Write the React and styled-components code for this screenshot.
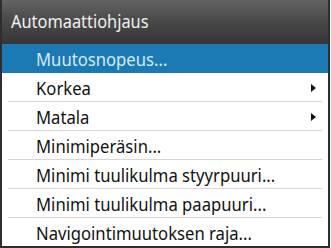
import React from "react";
import styled, { createGlobalStyle } from "styled-components";

const Global = createGlobalStyle`
  html, body { margin: 0; padding: 0; background: #f4f4f4; }
  body { width: 331px; height: 248px; overflow: hidden; }
`;

const Frame = styled.div`
  width: 330px;
  height: 248px;
  box-sizing: border-box;
  border-left: 2px solid #2e2e2e;
  border-right: 2px solid #2e2e2e;
  border-bottom: 2px solid #2e2e2e;
  display: flex;
  flex-direction: column;
  background: #ffffff;
  font-family: "Noto Sans", "Open Sans", sans-serif;
`;

const Header = styled.div`
  height: 44px;
  flex: none;
  box-sizing: border-box;
  padding: 9px 0 0 9px;
  background: linear-gradient(to bottom, #646464 0%, #4a4a4a 45%, #363636 100%);
`;

const Condensed = styled.span`
  display: inline-block;
  white-space: nowrap;
  font-size: 18px;
  transform: scaleX(${(p) => p.$sx || 0.925});
  transform-origin: left center;
`;

const Title = styled(Condensed)`
  color: #f0f0f0;
  line-height: 24px;
`;

const List = styled.div`
  display: flex;
  flex-direction: column;
`;

const Row = styled.div`
  height: 29px;
  flex: none;
  display: flex;
  align-items: flex-start;
  padding-left: 34px;
  padding-right: 12px;
  position: relative;
  background: ${(p) => (p.$active ? "#1b7ab4" : "transparent")};
  color: ${(p) => (p.$active ? "#d6ebf8" : "#111111")};
  &::after {
    content: "";
    display: ${(p) => (p.$last || p.$active ? "none" : "block")};
    position: absolute;
    left: 6px;
    right: 6px;
    bottom: 0;
    height: 1px;
    background: #dcd4d4;
  }
`;

const Label = styled(Condensed)`
  line-height: 29px;
  margin-top: 1px;
`;

const Spacer = styled.div`
  flex: 1;
`;

const Arrow = styled.svg`
  width: 5px;
  height: 8px;
  flex: none;
  align-self: center;
`;

const items = [
  { label: "Muutosnopeus...", active: true },
  { label: "Korkea", sub: true },
  { label: "Matala", sub: true },
  { label: "Minimiperäsin..." },
  { label: "Minimi tuulikulma styyrpuuri..." },
  { label: "Minimi tuulikulma paapuuri..." },
  { label: "Navigointimuutoksen raja...", last: true },
];

export default function App() {
  return (
    <>
      <Global />
      <Frame>
        <Header>
          <Title $sx={0.91}>Automaattiohjaus</Title>
        </Header>
        <List>
          {items.map((it) => (
            <Row key={it.label} $active={it.active} $last={it.last}>
              <Label>{it.label}</Label>
              <Spacer />
              {it.sub && (
                <Arrow viewBox="0 0 5 8">
                  <path d="M0 0 L5 4 L0 8 Z" fill="#111" />
                </Arrow>
              )}
            </Row>
          ))}
        </List>
      </Frame>
    </>
  );
}
